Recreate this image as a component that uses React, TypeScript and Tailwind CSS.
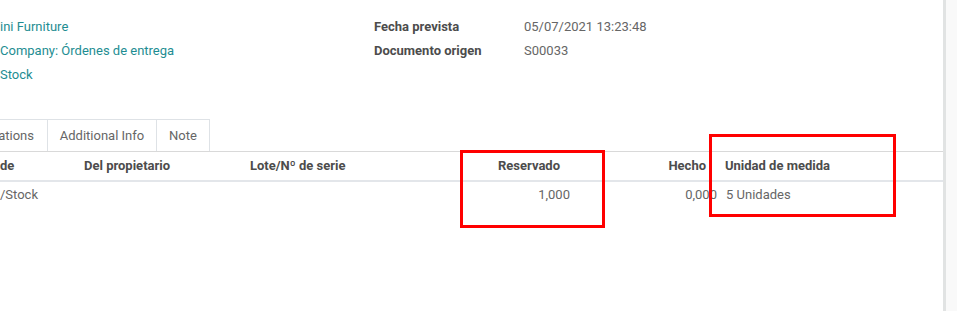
import React from 'react';

const leftFields = ['ini Furniture', 'Company: Órdenes de entrega', 'Stock'];

const rightFields = [
  { label: 'Fecha prevista', value: '05/07/2021 13:23:48' },
  { label: 'Documento origen', value: 'S00033' },
];

const tabs = [
  { name: 'ations', cls: 'w-[48px] justify-end pr-[13px]' },
  { name: 'Additional Info', cls: 'w-[109px] justify-center' },
  { name: 'Note', cls: 'w-[53px] justify-center' },
];

const App: React.FC = () => {
  return (
    <div className="relative flex w-[957px] h-[311px] overflow-hidden bg-white font-['Roboto',sans-serif] text-[13px]">
      <div className="w-[943px] flex flex-col">
        {/* header fields */}
        <div className="flex pt-[15px]">
          <div className="w-[374px] flex flex-col">
            {leftFields.map(f => (
              <div key={f} className="h-[24px] leading-[24px] text-[#1e8d92] whitespace-nowrap">{f}</div>
            ))}
          </div>
          <div className="flex flex-col">
            {rightFields.map(f => (
              <div key={f.label} className="flex h-[24px] leading-[24px]">
                <span className="w-[150px] font-bold text-[#4c4c4c]">{f.label}</span>
                <span className="text-[#666]">{f.value}</span>
              </div>
            ))}
          </div>
        </div>

        {/* tabs */}
        <div className="flex mt-[32px] h-[32px]">
          {tabs.map(t => (
            <div key={t.name} className={`flex items-center border-t border-r border-[#dee2e6] text-[#666] whitespace-nowrap ${t.cls}`}>
              {t.name}
            </div>
          ))}
        </div>

        {/* table */}
        <div className="border-t border-[#d9d9d9]">
          <div className="flex h-[30px] items-center font-bold text-[#4c4c4c] border-b-2 border-[#e3e6ea]">
            <div className="w-[84px]">de</div>
            <div className="w-[166px]">Del propietario</div>
            <div className="w-[220px]">Lote/Nº de serie</div>
            <div className="w-[104px] text-right pr-[14px]">Reservado</div>
            <div className="w-[146px] text-right pr-[14px]">Hecho</div>
            <div className="pl-[5px]">Unidad de medida</div>
          </div>
          <div className="flex h-[24px] pt-[2px] items-center text-[#666]">
            <div className="w-[84px]">/Stock</div>
            <div className="w-[166px]"></div>
            <div className="w-[220px]"></div>
            <div className="w-[104px] text-right pr-[4px]">1,000</div>
            <div className="w-[146px] text-right pr-[3px]">0,000</div>
            <div className="pl-[6px]">5 Unidades</div>
          </div>
        </div>
      </div>
      <div className="w-[3px] bg-[#e1e3e3]"></div>
      <div className="flex-1 bg-[#f9f9f9]"></div>

      {/* red annotation boxes */}
      <div className="absolute left-[460px] top-[150px] w-[145px] h-[78px] border-[3px] border-[#ff0000]"></div>
      <div className="absolute left-[709px] top-[134px] w-[187px] h-[83px] border-[3px] border-[#ff0000]"></div>
    </div>
  );
};

export default App;
